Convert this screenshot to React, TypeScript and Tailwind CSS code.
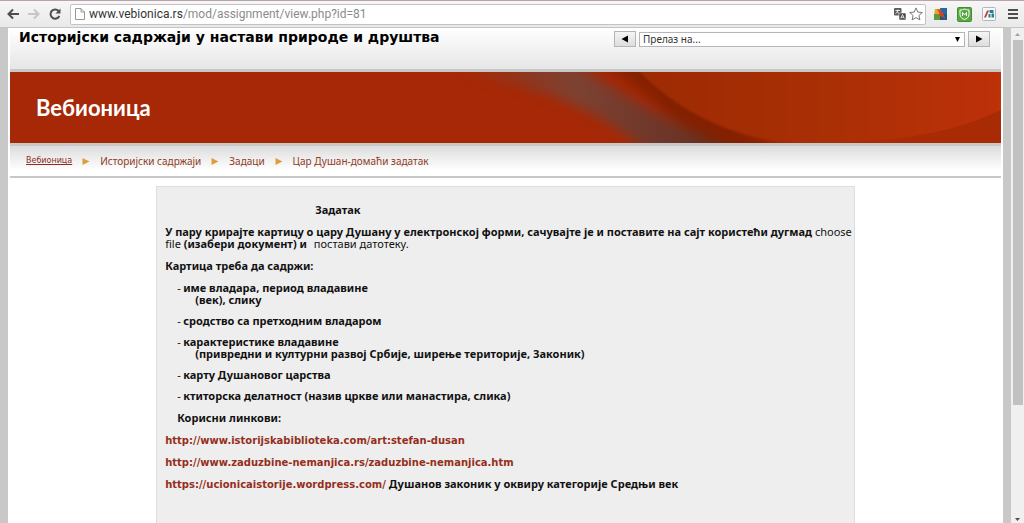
import { ReactNode } from "react";

type Crumb = { label: string; home?: boolean };

const CRUMBS: Crumb[] = [
  { label: "Вебионица", home: true },
  { label: "Историјски садржаји" },
  { label: "Задаци" },
  { label: "Цар Душан-домаћи задатак" },
];

type Requirement = { title: string; detail?: string };

const REQUIREMENTS: Requirement[] = [
  { title: "име владара, период владавине", detail: "(век), слику" },
  { title: "сродство са претходним владаром" },
  {
    title: "карактеристике владавине",
    detail: "(привредни и културни развој Србије, ширење територије, Законик)",
  },
  { title: "карту Душановог царства" },
  { title: "ктиторска делатност (назив цркве или манастира, слика)" },
];

const LINKS = [
  { url: "http://www.istorijskabiblioteka.com/art:stefan-dusan" },
  { url: "http://www.zaduzbine-nemanjica.rs/zaduzbine-nemanjica.htm" },
  {
    url: "https://ucionicaistorije.wordpress.com/",
    note: "Душанов законик у оквиру категорије Средњи век",
  },
];

function ToolbarButton({ label, children }: { label: string; children: ReactNode }) {
  return (
    <button aria-label={label} className="shrink-0">
      {children}
    </button>
  );
}

function Toolbar() {
  return (
    <header className="flex h-7 shrink-0 items-center border-t border-b border-t-[#b9a3ab] border-b-[#c4c4c4] bg-linear-to-b from-[#f6f6f6] to-[#e9e9e9] px-1.5">
      <div className="flex w-16 shrink-0 items-center justify-between pr-2">
        <ToolbarButton label="Back">
          <svg width="14" height="14" viewBox="0 0 14 14" fill="none" stroke="#4d4d4d" strokeWidth="2">
            <path d="M13 7H2.5M7 2.5 2.5 7 7 11.5" />
          </svg>
        </ToolbarButton>
        <ToolbarButton label="Forward">
          <svg width="14" height="14" viewBox="0 0 14 14" fill="none" stroke="#c6c6c6" strokeWidth="2">
            <path d="M1 7h10.5M7 2.5 11.5 7 7 11.5" />
          </svg>
        </ToolbarButton>
        <ToolbarButton label="Reload">
          <svg width="14" height="14" viewBox="0 0 14 14" fill="none" stroke="#4d4d4d" strokeWidth="2">
            <path d="M11.3 9A4.6 4.6 0 1 1 10.6 4" />
            <path d="M12.5 1.5v5h-5z" fill="#4d4d4d" stroke="none" />
          </svg>
        </ToolbarButton>
      </div>

      <div className="flex h-[21px] min-w-0 flex-1 items-center rounded-xs border border-[#c3c3c3] bg-white pr-0.5 pl-1">
        <svg className="shrink-0" width="10" height="12" viewBox="0 0 10 12" fill="none" stroke="#989898">
          <path d="M.5.5h5.500l3.500 3.500v7.500h-9zM6 .5V4h3.500" />
        </svg>
        <div className="ml-1 flex-1 truncate font-[Roboto,sans-serif] text-[12px] leading-4 text-[#8c8c8c]">
          <span className="text-[#333]">www.vebionica.rs</span>/mod/assignment/view.php?id=81
        </div>
        <div className="flex items-center gap-[3px]">
          <ToolbarButton label="Translate">
            <svg width="12" height="12" viewBox="0 0 12 12">
              <rect width="7.500" height="7.500" rx="1" fill="#5c5c5c" />
              <path d="M1.500 2.500h4.500M4 1.500c0 2-1 3.500-2.500 4M3 3.500 5.500 6" stroke="#fff" strokeWidth=".8" fill="none" />
              <rect x="5" y="5" width="7" height="7" rx="1" fill="#4a4a4a" stroke="#fff" strokeWidth=".5" />
              <path d="m6.700 10.500 1.800-4 1.800 4M7.300 9.300h2.400" stroke="#fff" strokeWidth=".8" fill="none" />
            </svg>
          </ToolbarButton>
          <ToolbarButton label="Bookmark">
            <svg width="14" height="14" viewBox="0 0 14 14" fill="#fff" stroke="#757575">
              <path d="m7 .9 1.800 4.200 4.500.4-3.400 3 1 4.400L7 10.600l-3.900 2.300 1-4.400-3.400-3 4.500-.4z" />
            </svg>
          </ToolbarButton>
        </div>
      </div>

      <div className="ml-2 flex shrink-0 items-center gap-[10px]">
        <ToolbarButton label="Gallery extension">
          <svg width="13" height="13" viewBox="0 0 13 13">
            <path d="M1 1h6v6H0z" fill="#e8a628" />
            <path d="M6 0h7v6L7 7z" fill="#27699b" />
            <path d="M6 6h7v6H6z" fill="#1c5c86" />
            <path d="M0 6h6v6H0z" fill="#5c9a3b" />
            <path d="M3 1c4 0 7 4 8 10C9 9 7 8 5 8c1-2 0-4-2-7z" fill="#d2432c" />
          </svg>
        </ToolbarButton>
        <ToolbarButton label="Shield extension">
          <svg width="15" height="15" viewBox="0 0 15 15">
            <rect x=".5" y=".5" width="14" height="14" rx="1" fill="#5aa746" stroke="#3f8f31" />
            <path d="M3 3c2 0 3.500-.5 4.500-1 1 .5 2.500 1 4.500 1v4.500c0 2.500-2 4-4.500 5-2.500-1-4.500-2.500-4.500-5z" fill="#5aa746" stroke="#fff" />
            <path d="M5.500 9V5.500L7.500 8l2-2.500V9" fill="none" stroke="#fff" />
          </svg>
        </ToolbarButton>
        <ToolbarButton label="Media extension">
          <svg width="14" height="14" viewBox="0 0 14 14">
            <rect x=".5" y=".5" width="13" height="13" rx="1" fill="#f8f8f8" stroke="#a9b9c2" />
            <path d="m2 10.500 3-7h2l-3 7z" fill="#c33c38" />
            <path d="M7.500 3h4v3h-4zM6.500 7h2v3.500h-2zM9.500 6.500h2.500v4H9.500z" fill="#287d91" />
          </svg>
        </ToolbarButton>
        <ToolbarButton label="Menu">
          <svg className="ml-0.5" width="10" height="11" viewBox="0 0 10 11" fill="#4d4d4d">
            <path d="M0 0h10v2H0zM0 4h10v2H0zM0 8h10v2H0z" />
          </svg>
        </ToolbarButton>
      </div>
    </header>
  );
}

function JumpButton({ label, points }: { label: string; points: string }) {
  return (
    <button
      aria-label={label}
      className="flex h-4 w-[22px] shrink-0 items-center justify-center border border-[#b5b5b5] bg-linear-to-b from-[#f5f5f5] to-[#dddddd]"
    >
      <svg width="8" height="8" viewBox="0 0 8 8">
        <polygon points={points} />
      </svg>
    </button>
  );
}

function CourseHeader() {
  return (
    <div className="flex h-11 shrink-0 items-start justify-between border-b-3 border-[#c8c8c8] bg-linear-to-b from-white to-[#e6e6e6] pr-[11px] pl-[9px]">
      <h1 className="text-[14px] leading-[18px] font-bold text-black">
        Историјски садржаји у настави природе и друштва
      </h1>
      <form className="mt-[3px] flex items-center gap-[3px]">
        <JumpButton label="Претходно" points="7,0.5 7,7.5 0.500,4" />
        <div className="relative">
          <select
            aria-label="Прелаз на"
            className="block h-[15px] w-[326px] appearance-none border border-[#b5b5b5] bg-white pl-[3px] font-['Noto_Sans',sans-serif] text-[10px] leading-3 text-[#333]"
          >
            <option>Прелаз на...</option>
          </select>
          <svg className="pointer-events-none absolute top-[5px] right-[5px]" width="5" height="5" viewBox="0 0 5 5">
            <polygon points="0,0 5,0 2.500,5" />
          </svg>
        </div>
        <JumpButton label="Следеће" points="1,0.5 1,7.5 7.500,4" />
      </form>
    </div>
  );
}

function Banner() {
  return (
    <div className="relative flex h-[71px] shrink-0 items-center overflow-hidden bg-[#a62806]">
      <svg className="absolute inset-0 size-full" viewBox="0 0 991 71" preserveAspectRatio="none" aria-hidden="true">
        <defs>
          <linearGradient id="dome" x1="0" y1="0" x2="1" y2="0">
            <stop offset="0" stopColor="#9d2b04" />
            <stop offset="0.5" stopColor="#a92f05" />
            <stop offset="1" stopColor="#bf310a" />
          </linearGradient>
          <linearGradient id="smoke" x1="0" y1="0" x2="1" y2="0">
            <stop offset="0" stopColor="#7d4232" stopOpacity="0" />
            <stop offset="0.400" stopColor="#7d4232" />
            <stop offset="1" stopColor="#5f2c20" />
          </linearGradient>
          <filter id="soft" x="-20%" y="-40%" width="140%" height="180%" colorInterpolationFilters="sRGB">
            <feGaussianBlur stdDeviation="6" />
          </filter>
          <filter id="edge" colorInterpolationFilters="sRGB">
            <feGaussianBlur stdDeviation="1" />
          </filter>
        </defs>
        <path d="M590-10h60C680 30 740 65 810 95H700C670 55 640 20 590-10z" fill="#842100" filter="url(#soft)" />
        <path d="M450-12H560C600 16 650 45 735 85H645C600 48 550 15 450 4z" fill="url(#smoke)" filter="url(#soft)" />
        <path d="M625-5C672 45 735 71 800 72H1000V-5z" fill="url(#dome)" filter="url(#edge)" />
        <path d="M991 38C948 58 905 68 825 71H991z" fill="#a82b05" />
      </svg>
      <h2 className="relative pl-[26px] font-[Lato,sans-serif] text-[22px] leading-7 font-bold text-white">
        Вебионица
      </h2>
    </div>
  );
}

function Breadcrumbs() {
  return (
    <nav
      aria-label="Навигација"
      className="flex h-[35px] shrink-0 items-center border-t-3 border-b-2 border-[#c8c8c8] bg-linear-to-b from-[#dcdcdc] to-white to-80% pl-4"
    >
      {CRUMBS.map(({ label, home }, i) => (
        <div key={label} className="flex items-center">
          {i > 0 && (
            <svg className="mx-[10px]" width="8" height="7" viewBox="0 0 8 7" fill="#d9a036">
              <polygon points="0.500,0 7.500,3.500 0.500,7" />
            </svg>
          )}
          <a
            href="#"
            className={
              home
                ? "text-[8px] text-[#8c2a20] underline"
                : "font-['Noto_Sans',sans-serif] text-[10px] text-[#8f3b22]"
            }
          >
            {label}
          </a>
        </div>
      ))}
    </nav>
  );
}

function Assignment() {
  return (
    <article className="mx-auto mt-2 flex w-[70.5%] flex-1 flex-col gap-[10px] border border-b-0 border-[#dedede] bg-[#eeeeee] pt-[17px] pl-2 font-['Noto_Sans',sans-serif] text-[11px] leading-3 font-bold text-[#111]">
      <h3 className="pl-[150px]">Задатак</h3>
      <p>
        У пару крирајте картицу о цару Душану у електронској форми, сачувајте је и поставите на сајт користећи
        дугмад <span className="font-normal">choose file</span> (изабери документ) и{" "}
        <span className="pl-1 font-normal">постави датотеку.</span>
      </p>
      <p>Картица треба да садржи:</p>
      <ul className="flex flex-col gap-[9px] pl-3">
        {REQUIREMENTS.map(({ title, detail }) => (
          <li key={title}>
            <span className="inline-block w-1.5 font-normal">-</span>
            {title}
            {detail && <div className="pl-[18px]">{detail}</div>}
          </li>
        ))}
      </ul>
      <p className="pl-3">Корисни линкови:</p>
      {LINKS.map(({ url, note }) => (
        <p key={url}>
          <a href={url} className="font-['DejaVu_Sans',Verdana,sans-serif] text-[10px] leading-none text-[#952e1c]">
            {url}
          </a>{" "}
          {note}
        </p>
      ))}
    </article>
  );
}

function Scrollbar() {
  return (
    <div className="flex w-[13px] shrink-0 flex-col items-center bg-[#f0f0f0]" aria-hidden="true">
      <svg className="mt-[5px] mb-1 shrink-0" width="5" height="3" viewBox="0 0 5 3" fill="#a0a0a0">
        <polygon points="0,3 2.500,0 5,3" />
      </svg>
      <div className="h-[365px] w-[10px] shrink-0 bg-[#c1c1c1]" />
      <svg className="mt-auto mb-0.5 shrink-0" width="5" height="3" viewBox="0 0 5 3" fill="#505050">
        <polygon points="0,0 5,0 2.500,3" />
      </svg>
    </div>
  );
}

export default function App() {
  return (
    <div className="flex h-screen flex-col overflow-hidden font-['DejaVu_Sans',Verdana,sans-serif]">
      <Toolbar />
      <div className="flex min-h-0 flex-1">
        <div className="flex min-w-0 flex-1 overflow-hidden bg-[#c8c8c8] pr-2 pl-2">
          <main className="flex min-w-0 flex-1 flex-col bg-white px-0.5">
            <CourseHeader />
            <Banner />
            <Breadcrumbs />
            <Assignment />
          </main>
        </div>
        <Scrollbar />
      </div>
    </div>
  );
}
